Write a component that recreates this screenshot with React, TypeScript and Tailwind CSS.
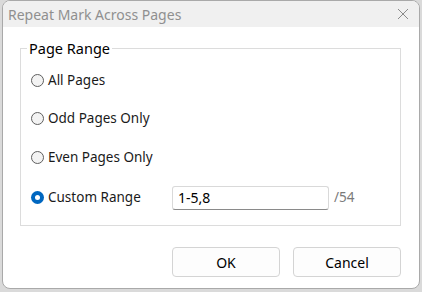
const Radio = ({ checked, label }: { checked?: boolean; label: string }) => (
  <label className="flex h-[20px] items-center gap-[4px]">
    {checked ? (
      <span className="flex h-[13px] w-[13px] items-center justify-center rounded-full bg-[#0067c0]">
        <span className="h-[5px] w-[5px] rounded-full bg-white" />
      </span>
    ) : (
      <span className="h-[13px] w-[13px] rounded-full border border-[#5f5f5f] bg-[#f3f3f3]" />
    )}
    <span>{label}</span>
  </label>
);

export default function App() {
  return (
    <div
      className="h-[292px] w-[422px] bg-[#dadada] pl-[2px]"
      style={{ fontFamily: "'Noto Sans', 'Liberation Sans', sans-serif" }}
    >
      <div className="flex h-[289px] w-[418px] flex-col overflow-hidden rounded-[8px] border border-[#a9a9a9] bg-white">
        <div className="flex h-[26px] shrink-0 items-center justify-between bg-[#f0f0f0] pl-[5px] pr-[10px]">
          <span className="text-[14px] text-[#8f8f8f]">Repeat Mark Across Pages</span>
          <svg width="12" height="12" viewBox="0 0 12 12" className="text-[#8a8a8a]">
            <path d="M1 1 L11 11 M11 1 L1 11" stroke="currentColor" strokeWidth="1" />
          </svg>
        </div>

        <div className="flex flex-1 flex-col px-[17px] pt-[11px]">
          <fieldset className="h-[188px] w-[381px] border border-[#dcdcdc]">
            <legend className="ml-[6px] px-[2px] text-[14.5px] leading-[20px] text-black">
              Page Range
            </legend>
            <div className="flex flex-col gap-[18.5px] pl-[10px] pt-[12px] text-[13.5px] text-[#1a1a1a]">
              <Radio label="All Pages" />
              <Radio label="Odd Pages Only" />
              <Radio label="Even Pages Only" />
              <div className="flex items-center">
                <div className="w-[141px]">
                  <Radio checked label="Custom Range" />
                </div>
                <input
                  readOnly
                  value="1-5,8"
                  className="h-[24px] w-[157px] rounded-[3px] border border-[#d9d9d9] border-b-[#8a8a8a] px-[5px] text-[14px] text-black outline-none"
                />
                <span className="ml-[5px] text-[13.5px] text-[#7a7a7a]">/54</span>
              </div>
            </div>
          </fieldset>

          <div className="mt-[21px] flex justify-end gap-[13px] pr-[1px]">
            <button className="h-[30px] w-[108px] rounded-[4px] border border-[#d4d4d4] bg-[#fdfdfd] text-[14px] text-black">
              OK
            </button>
            <button className="h-[30px] w-[108px] rounded-[4px] border border-[#d4d4d4] bg-[#fdfdfd] text-[14px] text-black">
              Cancel
            </button>
          </div>
        </div>
      </div>
    </div>
  );
}
